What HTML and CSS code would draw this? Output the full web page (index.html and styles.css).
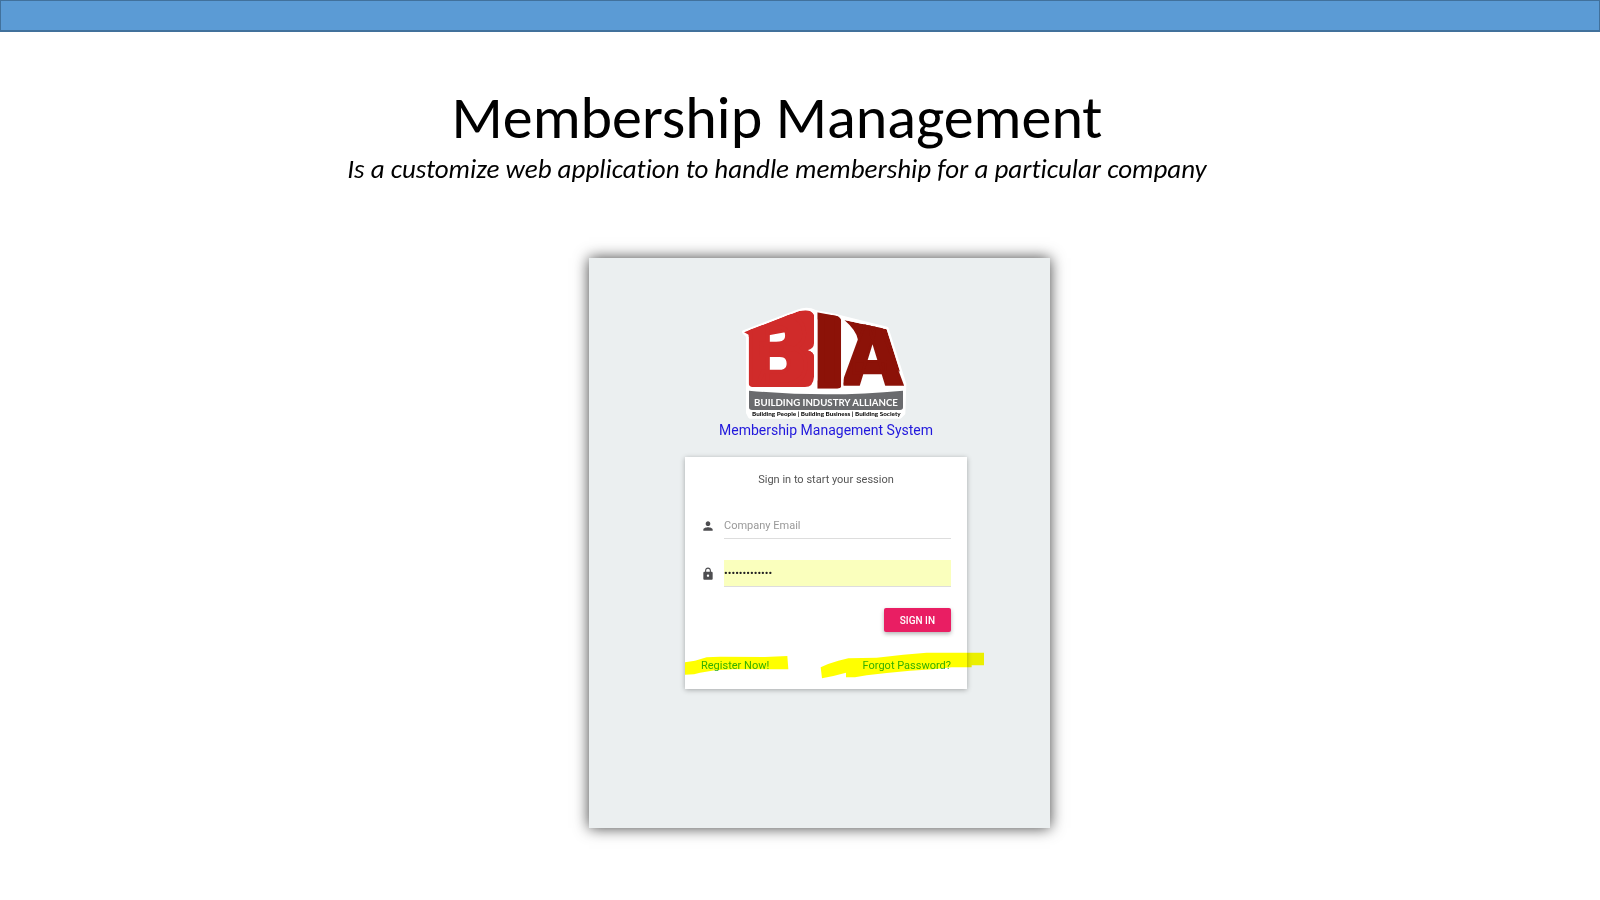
FILE: index.html
```html
<!DOCTYPE html>
<html lang="en">
<head>
  <meta charset="UTF-8" />
  <meta name="viewport" content="width=device-width, initial-scale=1.0"/>
  <title>Membership Management</title>
  <link rel="stylesheet" href="styles.css">
</head>
<body>

  <div class="top-bar"></div>

  <header class="intro">
    <h1>Membership Management</h1>
    <p>Is a customize web application to handle membership for a particular company</p>
  </header>

  <!-- Login screen -->
  <main class="login-page">
    <div class="login-box">
      <div class="logo">
        <svg class="logo-img" viewBox="39 18 498 342" role="img" aria-label="Building Industry Alliance">
          <defs>
            <clipPath id="roofB"><path d="M42 97 L205 34 Q244 24 252 44 V130 Q252 146 232 151 Q252 156 252 172 V230 Q250 261 225 261 H66 Q56 259 56 250 V104Z"/></clipPath>
            <clipPath id="roofI"><path d="M256 36 L320 48 Q334 52 334 66 V256 Q334 266 322 266 H246 Q258 258 262 240 V60Z"/></clipPath>
            <clipPath id="roofA"><path d="M343 60 L470 88 L522 250 V262 H340Z"/></clipPath>
          </defs>
          <path class="logo-back" d="M42 96 L205 34 Q232 24 256 36 L322 49 L470 86 L523 252 L520 340 L510 350 H60 L54 338 V108Z"/>
          <g clip-path="url(#roofB)">
            <path class="red" d="M40 96 L205 34 Q240 24 252 44 V180 L190 150 V92 L62 116Z"/>
            <path class="red" d="M188 150 L252 150 V262 H150 V232 H182Z"/>
            <text class="letter red letter-b" x="46" y="256">B</text>
          </g>
          <g clip-path="url(#roofI)">
            <text class="letter letter-i dark" x="253" y="258">I</text>
          </g>
          <g clip-path="url(#roofA)">
            <path class="dark" d="M343 60 L470 88 L510 215 L470 190 L438 104 H412 L395 140 L384 120 Q380 92 343 60Z"/>
            <text class="letter letter-a dark" x="339" y="256">A</text>
          </g>
          <path class="grey" d="M57 272 Q290 294 519 272 V322 Q519 330 510 330 H66 Q57 330 57 322Z"/>
          <text class="logo-name" x="288" y="317">BUILDING INDUSTRY ALLIANCE</text>
          <text class="logo-motto" x="289" y="349">Building People | Building Business | Building Society</text>
        </svg>
        <h2>Membership Management System</h2>
      </div>

      <form class="card">
        <div class="msg">Sign in to start your session</div>

        <div class="input-group">
          <svg class="icon" viewBox="0 0 24 24" aria-hidden="true"><path d="M12 12c2.21 0 4-1.79 4-4s-1.79-4-4-4-4 1.79-4 4 1.79 4 4 4zm0 2c-2.67 0-8 1.34-8 4v2h16v-2c0-2.66-5.33-4-8-4z"/></svg>
          <input type="email" id="email" placeholder="Company Email" aria-label="Company Email" />
        </div>

        <div class="input-group">
          <svg class="icon" viewBox="0 0 24 24" aria-hidden="true"><path d="M18 8h-1V6c0-2.76-2.24-5-5-5S7 3.24 7 6v2H6c-1.1 0-2 .9-2 2v10c0 1.1.9 2 2 2h12c1.1 0 2-.9 2-2V10c0-1.1-.9-2-2-2zm-6 9c-1.1 0-2-.9-2-2s.9-2 2-2 2 .9 2 2-.9 2-2 2zm3.1-9H8.9V6c0-1.71 1.39-3.1 3.1-3.1s3.1 1.39 3.1 3.1v2z"/></svg>
          <input type="password" id="password" class="filled" value="password12345" aria-label="Password" />
        </div>

        <div class="actions">
          <button type="button">SIGN IN</button>
        </div>

        <div class="links">
          <a href="#">Register Now!</a>
          <a href="#">Forgot Password?</a>
          <!-- Marker strokes over the links -->
          <svg class="marker" viewBox="45 240 900 90" aria-hidden="true">
            <path d="M45 277 L75 272 L110 262 L150 260 L285 261 L352 258 L355 298 L190 298 L135 301 L90 308 L72 313 L45 314Z"/>
            <path d="M452 292 Q475 280 505 272 L535 265 L620 263 L700 254 L770 248 L942 248 V286 L905 286 V292 L845 292 L790 298 L720 302 L650 309 L590 316 L555 322 L528 322 V308 L490 318 L456 325Z"/>
          </svg>
        </div>
      </form>
    </div>
  </main>

</body>
</html>
```
FILE: styles.css
```css
* {
  box-sizing: border-box;
}

body {
  margin: 0;
  background: #fff;
  font-family: Roboto, sans-serif;
}

.top-bar {
  height: 32px;
  background: #5b9bd5;
  border: 1px solid #41719c;
  border-bottom-width: 2px;
}

/* Title */
.intro {
  padding: 52px 46px 0 0;
  text-align: center;
  color: #000;
  font-family: Carlito, Lato, sans-serif;
  font-variant-ligatures: none;
}

.intro h1 {
  margin: 0;
  font-size: 60px;
  font-weight: 400;
  line-height: 68px;
}

.intro p {
  margin: 0;
  font-size: 27px;
  font-style: italic;
  line-height: 34px;
}

/* Login screen */
.login-page {
  display: flex;
  justify-content: center;
  padding: 72px 0 40px 39px;
}

.login-box {
  width: 461px;
  padding: 48px 83px 139px 96px;
  background: #ebeff0;
  box-shadow: 0 0 14px rgba(0, 0, 0, 0.75);
}

.logo {
  margin-bottom: 16px;
  text-align: center;
}

.logo-img {
  display: block;
  width: 166px;
  margin: 0 auto;
  overflow: visible;
}

.logo h2 {
  margin: 0;
  color: #2118dc;
  font-size: 14px;
  font-weight: 400;
  line-height: 21px;
}

.logo-back {
  fill: #fff;
  stroke: #fff;
  stroke-width: 12;
  stroke-linejoin: round;
}

.red { fill: #d02b2a; }
.dark { fill: #8c1208; }
.grey { fill: #6a6b6e; }

.letter {
  font-family: Roboto, sans-serif;
  font-size: 300px;
  font-weight: 900;
}

.letter-b {
  stroke: #d02b2a;
  stroke-width: 12;
}

.letter-i {
  stroke: #8c1208;
  stroke-width: 20;
}

.letter-a {
  font-size: 260px;
  stroke: #8c1208;
  stroke-width: 8;
}

.logo-name {
  fill: #fff;
  font-family: Lato, sans-serif;
  font-size: 29px;
  font-weight: 700;
  text-anchor: middle;
}

.logo-motto {
  fill: #111;
  font-family: Lato, sans-serif;
  font-size: 19px;
  font-weight: 900;
  text-anchor: middle;
}

/* Card */
.card {
  padding: 15px 16px;
  background: #fff;
  box-shadow: 0 1px 5px rgba(0, 0, 0, 0.3);
  font-size: 11px;
}

.msg {
  margin-bottom: 24px;
  color: #555;
  line-height: 16px;
  text-align: center;
}

.input-group {
  display: flex;
  align-items: center;
  gap: 9px;
  margin-bottom: 21px;
}

.icon {
  flex: none;
  width: 14px;
  height: 14px;
  fill: #4d4d50;
}

.input-group input {
  flex: 1;
  min-width: 0;
  height: 27px;
  padding: 0;
  border: 0;
  border-bottom: 1px solid #ddd;
  outline: none;
  background: #fff;
  color: #222;
  font-family: inherit;
  font-size: 11px;
}

.input-group input::placeholder {
  color: #999;
}

.input-group input.filled {
  background: #faffbd;
}

.actions {
  display: flex;
  justify-content: flex-end;
  margin-bottom: 26px;
}

.actions button {
  height: 24px;
  padding: 0 16px;
  border: 0;
  border-radius: 2px;
  background: #e91e63;
  box-shadow: 0 2px 4px rgba(0, 0, 0, 0.3);
  color: #fff;
  font-family: inherit;
  font-size: 10px;
  font-weight: 500;
  cursor: pointer;
}

.links {
  display: flex;
  justify-content: space-between;
  position: relative;
  line-height: 16px;
}

.links a {
  color: #35b03a;
  text-decoration: none;
}

.marker {
  position: absolute;
  top: -8px;
  left: -16px;
  width: 300px;
  height: 30px;
  fill: #ff0;
  mix-blend-mode: multiply;
  pointer-events: none;
}
```
